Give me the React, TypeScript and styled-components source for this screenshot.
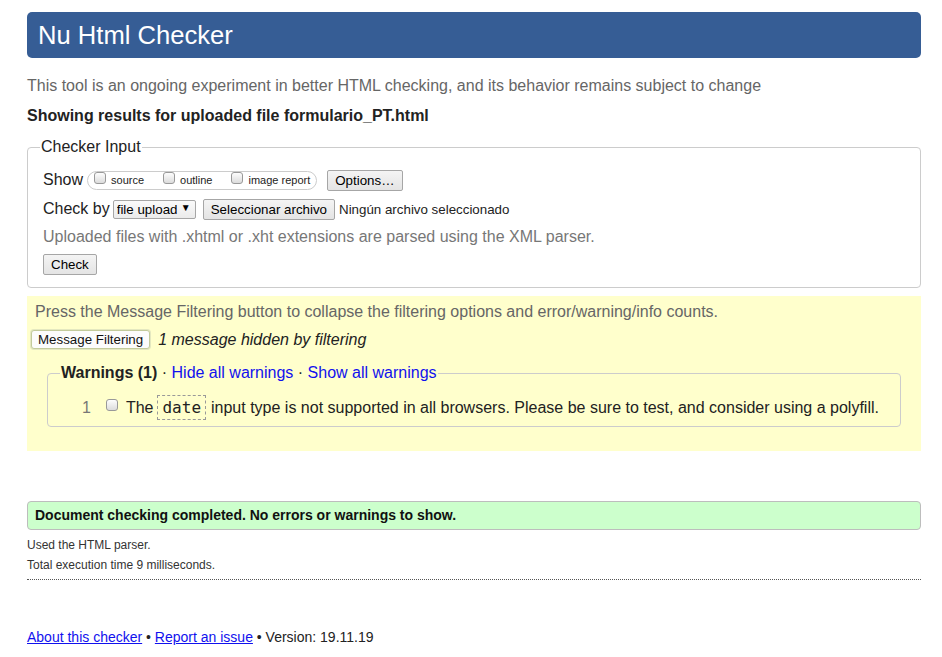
import React from "react";
import styled, { createGlobalStyle } from "styled-components";

const Global = createGlobalStyle`
  html, body { margin: 0; padding: 0; background: #fff; }
  body {
    font-family: "Liberation Sans", Arial, sans-serif;
    color: #222;
    font-size: 16px;
  }
  * { box-sizing: border-box; }
`;

const Page = styled.div`
  padding: 12px 21px 0 27px;
`;

const Header = styled.h1`
  margin: 0;
  height: 46px;
  background: #365d95;
  border-radius: 5px;
  color: #fff;
  font-weight: normal;
  font-size: 25.6px;
  line-height: 46px;
  padding-left: 11px;
`;

const Intro = styled.p`
  margin: 18px 0 0;
  line-height: 20px;
  color: #666;
`;

const Showing = styled.p`
  margin: 10px 0 0;
  line-height: 20px;
  font-weight: bold;
  color: #222;
`;

const InputSet = styled.fieldset`
  margin: 11px 0 0;
  padding: 12px 15px 12px;
  border: 1px solid #ccc;
  border-radius: 4px;
  display: flex;
  flex-direction: column;
  gap: 7px;
  min-width: 0;
`;

const SetLegend = styled.legend`
  font-size: 16px;
  line-height: 20px;
  padding: 0 1px;
  margin-left: -3px;
  color: #222;
`;

const Row = styled.div`
  display: flex;
  align-items: center;
  height: 22px;
`;

const Label = styled.span<{ $gap?: number }>`
  font-size: 16px;
  line-height: 20px;
  margin-right: ${(p) => p.$gap ?? 4}px;
`;

const Pill = styled.span`
  display: inline-flex;
  align-items: center;
  height: 19px;
  border: 1px solid #ccc;
  border-radius: 10px;
  padding: 0 6px 0 6px;
  margin-right: 10px;
`;

const Option = styled.label<{ $last?: boolean }>`
  display: inline-flex;
  align-items: center;
  font-size: 11px;
  color: #222;
  margin-right: ${(p) => (p.$last ? 0 : 19)}px;
`;

const Box = styled.input.attrs({ type: "checkbox" })`
  appearance: none;
  -webkit-appearance: none;
  width: 12px;
  height: 12px;
  margin: -4px 5px 0 0;
  border: 1px solid #999;
  border-radius: 3px;
  background: linear-gradient(#fdfdfd, #dcdcdc);
  flex: none;
`;

const Button = styled.button<{ $ml?: number }>`
  font-family: "Liberation Sans", Arial, sans-serif;
  font-size: 13.33px;
  line-height: 15px;
  height: 21px;
  padding: 2px 7px;
  color: #000;
  background: linear-gradient(#f4f4f4, #e4e4e4);
  border: 1px solid #a6a6a6;
  border-radius: 2px;
  margin-left: ${(p) => p.$ml ?? 0}px;
`;

const SelectWrap = styled.span`
  position: relative;
  display: inline-block;
  margin-right: 7px;
`;

const Select = styled.select`
  appearance: none;
  -webkit-appearance: none;
  font-family: "Liberation Sans", Arial, sans-serif;
  font-size: 13.33px;
  height: 19px;
  width: 83px;
  padding: 0 0 0 3px;
  color: #000;
  background: linear-gradient(#fafafa, #ebebeb);
  border: 1px solid #a6a6a6;
  border-radius: 2px;
`;

const Arrow = styled.span`
  position: absolute;
  right: 5px;
  top: 2px;
  font-size: 10px;
  color: #000;
  pointer-events: none;
`;

const FileText = styled.span`
  font-size: 13.33px;
  margin-left: 4px;
  color: #222;
`;

const Hint = styled.p`
  margin: 0 0 -1px;
  line-height: 20px;
  color: #777;
`;

const Filter = styled.section`
  margin-top: 8px;
  background: #ffffcc;
  padding: 6px 0 24px;
`;

const FilterText = styled.p`
  margin: 0;
  padding: 0 8px;
  line-height: 20px;
  color: #666;
`;

const FilterRow = styled.div`
  display: flex;
  align-items: center;
  height: 21px;
  margin: 7px 0 0 4px;
  gap: 8px;
`;

const FilterButton = styled.button`
  font-family: "Liberation Sans", Arial, sans-serif;
  font-size: 13.33px;
  height: 19px;
  line-height: 15px;
  padding: 1px 6px;
  color: #111;
  background: #fcfcfc;
  border: 1px solid #c3cb9c;
  border-radius: 3px;
  box-shadow: 0 0 0 1px #e4e8c0;
`;

const Hidden = styled.em`
  font-size: 16px;
  color: #222;
`;

const WarnSet = styled.fieldset`
  margin: 13px 20px 0;
  padding: 12px 12px 6px;
  border: 1px solid #ccc;
  border-radius: 4px;
  min-width: 0;
`;

const WarnLegend = styled.legend`
  font-size: 16px;
  line-height: 20px;
  padding: 0 1px;
  margin-left: 0;
  color: #222;
`;

const Strong = styled.strong`
  font-weight: bold;
`;

const Link = styled.a<{ $underline?: boolean }>`
  color: #1111ee;
  text-decoration: ${(p) => (p.$underline ? "underline" : "none")};
`;

const Message = styled.div`
  display: flex;
  align-items: center;
  height: 25px;
  padding-left: 22px;
  font-size: 16px;
  color: #222;
`;

const Num = styled.span`
  color: #777;
  margin-right: 15px;
`;

const MsgBox = styled(Box)`
  margin: -6px 8px 0 0;
`;

const Code = styled.code`
  font-family: "DejaVu Sans Mono", monospace;
  font-size: 16px;
  line-height: 19px;
  padding: 2px 4px;
  border: 1px dashed #999;
  margin: 0 5px 0 4px;
  color: #222;
`;

const Success = styled.div`
  margin-top: 50px;
  background: #ccffcc;
  border: 1px solid #bdbdbd;
  border-radius: 4px;
  padding: 5px 7px;
  line-height: 17px;
  font-size: 14px;
  font-weight: bold;
  color: #111;
`;

const Details = styled.div`
  margin-top: 5px;
  padding-bottom: 4px;
  border-bottom: 1px dotted #555;
`;

const Detail = styled.p`
  margin: 0;
  font-size: 12px;
  line-height: 20px;
  color: #333;
`;

const Footer = styled.p`
  margin: 47px 0 0;
  font-size: 14px;
  line-height: 20px;
  color: #222;
`;

export default function App() {
  return (
    <Page>
      <Global />
      <Header>Nu Html Checker</Header>
      <Intro>
        This tool is an ongoing experiment in better HTML checking, and its behavior remains subject to change
      </Intro>
      <Showing>Showing results for uploaded file formulario_PT.html</Showing>

      <InputSet>
        <SetLegend>Checker Input</SetLegend>
        <Row>
          <Label>Show</Label>
          <Pill>
            <Option>
              <Box />
              source
            </Option>
            <Option>
              <Box />
              outline
            </Option>
            <Option $last>
              <Box />
              image report
            </Option>
          </Pill>
          <Button>Options…</Button>
        </Row>
        <Row>
          <Label $gap={3}>Check by</Label>
          <SelectWrap>
            <Select defaultValue="file">
              <option value="file">file upload</option>
            </Select>
            <Arrow>▼</Arrow>
          </SelectWrap>
          <Button>Seleccionar archivo</Button>
          <FileText>Ningún archivo seleccionado</FileText>
        </Row>
        <Hint>Uploaded files with .xhtml or .xht extensions are parsed using the XML parser.</Hint>
        <Row>
          <Button>Check</Button>
        </Row>
      </InputSet>

      <Filter>
        <FilterText>
          Press the Message Filtering button to collapse the filtering options and error/warning/info counts.
        </FilterText>
        <FilterRow>
          <FilterButton>Message Filtering</FilterButton>
          <Hidden>1 message hidden by filtering</Hidden>
        </FilterRow>
        <WarnSet>
          <WarnLegend>
            <Strong>Warnings (1)</Strong> · <Link href="#">Hide all warnings</Link> ·{" "}
            <Link href="#">Show all warnings</Link>
          </WarnLegend>
          <Message>
            <Num>1</Num>
            <MsgBox />
            The
            <Code>date</Code>
            input type is not supported in all browsers. Please be sure to test, and consider using a polyfill.
          </Message>
        </WarnSet>
      </Filter>

      <Success>Document checking completed. No errors or warnings to show.</Success>
      <Details>
        <Detail>Used the HTML parser.</Detail>
        <Detail>Total execution time 9 milliseconds.</Detail>
      </Details>

      <Footer>
        <Link href="#" $underline>
          About this checker
        </Link>{" "}
        •{" "}
        <Link href="#" $underline>
          Report an issue
        </Link>{" "}
        • Version: 19.11.19
      </Footer>
    </Page>
  );
}
